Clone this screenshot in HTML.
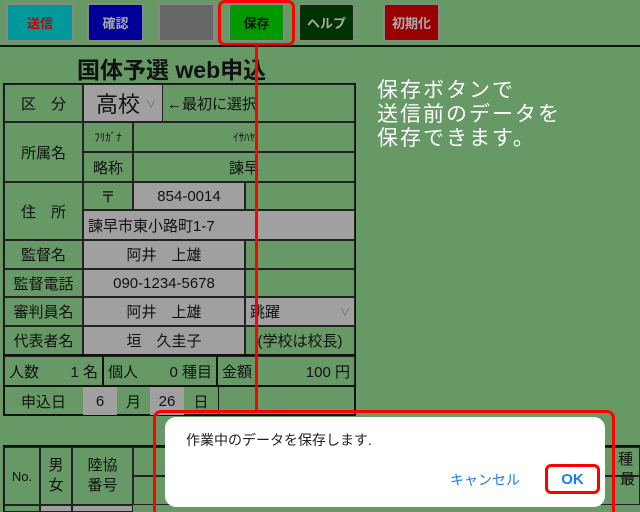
<!DOCTYPE html>
<html style="width:640px;height:512px;overflow:hidden"><head><meta charset="utf-8"><style>
*{margin:0;padding:0;box-sizing:border-box}
body{width:640px;height:512px;background:#669966;position:relative;overflow:hidden;font-family:"Liberation Sans","Noto Sans CJK JP",sans-serif;color:#111}
.a{position:absolute}
.btn{position:absolute;top:3px;height:39px;border:2px solid #888;border-radius:3px;font-size:13px;font-weight:bold;display:flex;align-items:center;justify-content:center}
.c{position:absolute;display:flex;align-items:center;justify-content:center;font-size:15px;border:1px solid #222}
.g{background:#a0a0a0}
.hl{position:absolute;background:#111;height:2px}
.vl{position:absolute;background:#111;width:2px}
</style></head><body>
<div class="btn" style="left:6px;width:68px;background:#009999;color:#cc0000">送信</div>
<div class="btn" style="left:87px;width:57px;background:#000099;color:#aaa">確認</div>
<div class="btn" style="left:158px;width:57px;background:#666"></div>
<div class="btn" style="left:228px;width:57px;background:#009900;color:#111">保存</div>
<div class="btn" style="left:298px;width:57px;background:#003300;color:#aaa">ヘルプ</div>
<div class="btn" style="left:383px;width:57px;background:#990000;color:#aaa">初期化</div>
<div class="a" style="left:218px;top:0;width:77px;height:46px;border:3px solid #ff0000;border-radius:7px"></div>
<div class="a" style="left:0;top:45px;width:640px;height:2px;background:#111"></div>
<div class="a" style="left:77px;top:51px;font-size:23px;font-weight:bold;white-space:nowrap">国体予選 web申込</div>

<div class="a" style="left:377px;top:79px;font-size:21px;line-height:24px;letter-spacing:2px;color:#fff;white-space:nowrap">保存ボタンで<br>送信前のデータを<br>保存できます。</div>

<!-- table -->
<div class="a" style="left:3px;top:83px;width:353px;height:333px;border:2px solid #111"></div>
<div class="c" style="left:4px;top:84px;width:79px;height:38px">区　分</div>
<div class="c g" style="left:83px;top:84px;width:80px;height:38px;font-size:22px;justify-content:flex-start;padding-left:12px">高校<span style="font-size:10px;margin-left:6px;color:#666">∨</span></div>
<div class="c" style="left:163px;top:84px;width:192px;height:38px;justify-content:flex-start;padding-left:4px;border-left:none">←最初に選択</div>
<div class="c" style="left:4px;top:122px;width:79px;height:60px">所属名</div>
<div class="c" style="left:83px;top:122px;width:50px;height:30px;font-size:11px">ﾌﾘｶﾞﾅ</div>
<div class="c" style="left:133px;top:122px;width:222px;height:30px;font-size:11px">ｲｻﾊﾔ</div>
<div class="c" style="left:83px;top:152px;width:50px;height:30px">略称</div>
<div class="c" style="left:133px;top:152px;width:222px;height:30px">諫早</div>
<div class="c" style="left:4px;top:182px;width:79px;height:58px">住　所</div>
<div class="c" style="left:83px;top:182px;width:50px;height:28px">〒</div>
<div class="c g" style="left:133px;top:182px;width:112px;height:28px">854-0014</div>
<div class="c" style="left:245px;top:182px;width:110px;height:28px"></div>
<div class="c g" style="left:83px;top:210px;width:272px;height:30px;justify-content:flex-start;padding-left:4px">諫早市東小路町1-7</div>
<div class="c" style="left:4px;top:240px;width:79px;height:29px">監督名</div>
<div class="c g" style="left:83px;top:240px;width:162px;height:29px">阿井　上雄</div>
<div class="c" style="left:245px;top:240px;width:110px;height:29px"></div>
<div class="c" style="left:4px;top:269px;width:79px;height:28px">監督電話</div>
<div class="c g" style="left:83px;top:269px;width:162px;height:28px">090-1234-5678</div>
<div class="c" style="left:245px;top:269px;width:110px;height:28px"></div>
<div class="c" style="left:4px;top:297px;width:79px;height:29px">審判員名</div>
<div class="c g" style="left:83px;top:297px;width:162px;height:29px">阿井　上雄</div>
<div class="c g" style="left:245px;top:297px;width:110px;height:29px;justify-content:space-between;padding:0 4px">跳躍<span style="font-size:10px;color:#666">∨</span></div>
<div class="c" style="left:4px;top:326px;width:79px;height:29px">代表者名</div>
<div class="c g" style="left:83px;top:326px;width:162px;height:29px">垣　久圭子</div>
<div class="c" style="left:245px;top:326px;width:110px;height:29px">(学校は校長)</div>
<div class="hl" style="left:3px;top:354px;width:353px"></div>
<div class="c" style="left:4px;top:356px;width:99px;height:30px;justify-content:space-between;padding:0 4px"><span>人数</span><span>1 名</span></div>
<div class="c" style="left:103px;top:356px;width:114px;height:30px;justify-content:space-between;padding:0 4px"><span>個人</span><span>0 種目</span></div>
<div class="c" style="left:217px;top:356px;width:138px;height:30px;justify-content:space-between;padding:0 4px"><span>金額</span><span>100 円</span></div>
<div class="vl" style="left:102px;top:355px;height:31px"></div>
<div class="vl" style="left:216px;top:355px;height:31px"></div>
<div class="hl" style="left:3px;top:385px;width:353px"></div>
<div class="c" style="left:4px;top:387px;width:79px;height:28px;border:none">申込日</div>
<div class="c g" style="left:83px;top:387px;width:34px;height:28px;border:none">6</div>
<div class="c" style="left:117px;top:387px;width:33px;height:28px;border:none">月</div>
<div class="c g" style="left:150px;top:387px;width:34px;height:28px;border:none">26</div>
<div class="c" style="left:184px;top:387px;width:34px;height:28px;border:none">日</div>
<div class="vl" style="left:218px;top:386px;height:30px;width:1px"></div>

<!-- lower table -->
<div class="a" style="left:3px;top:445px;width:637px;height:67px;border-top:2px solid #111;border-left:2px solid #111"></div>
<div class="c" style="left:4px;top:447px;width:36px;height:58px;font-size:13px">No.</div>
<div class="c" style="left:40px;top:447px;width:32px;height:58px;line-height:20px;text-align:center">男<br>女</div>
<div class="c" style="left:72px;top:447px;width:61px;height:58px;line-height:20px;text-align:center">陸協<br>番号</div>
<div class="c" style="left:133px;top:447px;width:507px;height:29px"></div>
<div class="c" style="left:133px;top:476px;width:507px;height:29px"></div>
<div class="c" style="left:4px;top:505px;width:36px;height:7px"></div>
<div class="c g" style="left:40px;top:505px;width:32px;height:7px"></div>
<div class="c g" style="left:72px;top:505px;width:61px;height:7px"></div>
<div class="a" style="left:618px;top:448px;font-size:15px">種</div>
<div class="a" style="left:620px;top:468px;font-size:15px">最</div>

<div class="a" style="left:255px;top:46px;width:3px;height:365px;background:#ff0000"></div>

<!-- dialog -->
<div class="a" style="left:153px;top:410px;width:462px;height:110px;border:3px solid #ff0000;border-radius:8px"></div>
<div class="a" style="left:165px;top:417px;width:440px;height:90px;background:#fff;border-radius:11px"></div>
<div class="a" style="left:186px;top:430px;font-size:14px;color:#222">作業中のデータを保存します.</div>
<div class="a" style="left:450px;top:470px;font-size:14px;color:#1a7ee8">キャンセル</div>
<div class="a" style="left:545px;top:464px;width:55px;height:30px;border:3px solid #ff0000;border-radius:6px;display:flex;align-items:center;justify-content:center;font-size:15px;font-weight:bold;color:#1a7ee8">OK</div>
</body></html>
